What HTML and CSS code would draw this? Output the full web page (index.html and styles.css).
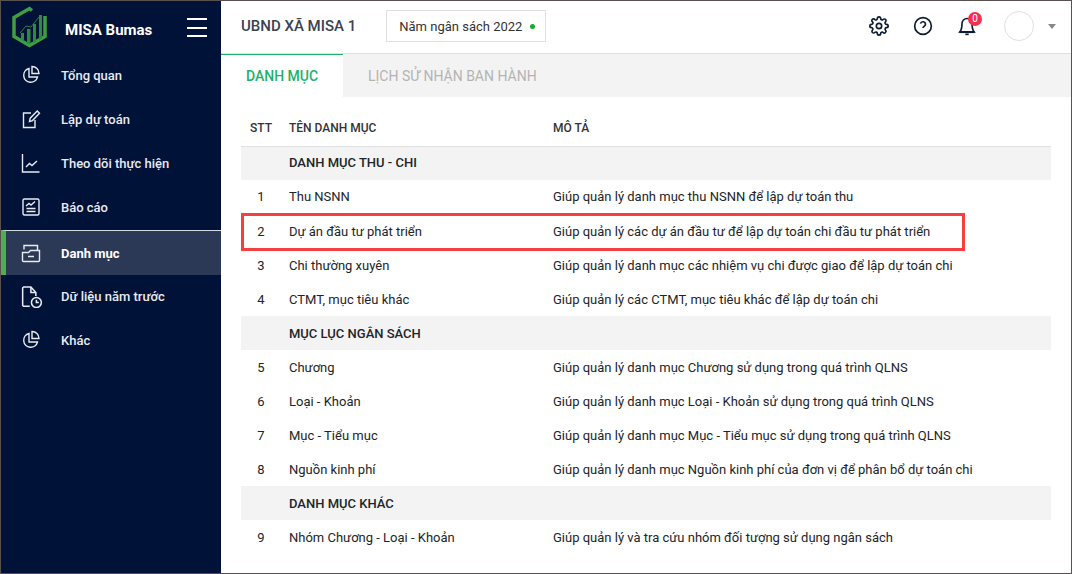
FILE: index.html
```html
<!DOCTYPE html>
<html>

<head>
  <meta charset="utf-8">
  <link rel="stylesheet" href="styles.css">
</head>

<body>
  <div class="app">
    <div class="sidebar">
      <div class="brand">
        <svg class="logo" viewBox="0 0 36 42" width="36" height="42">
          <path d="M20 4.500 17.500 2.500 2 11.500V30.500L17.500 39.500 33 30.500V10" fill="none" stroke="#3f9e42" stroke-width="3.500"/>
          <path d="M8 27 14 20 19 21 27 11" fill="none" stroke="#2f7d3a" stroke-width="1"/>
          <path d="M9 27h3v8.500l-3-1.700zM15 23h3.500v14.500h-3.500zM21 18h3v17.800l-3 1.500zM27 9h3v23l-3 2z" fill="#2f8a3c"/>
        </svg>
        <span class="brand-name">MISA Bumas</span>
        <div class="burger"><span></span><span></span><span></span></div>
      </div>

      <div class="menu">
        <div class="menu-item">
          <svg class="menu-icon" viewBox="0 0 20 20"><path d="M8 3.500a7 7 0 1 0 8.500 8.500H8z"/><path d="M11 1.500a7 7 0 0 1 7 7h-7z"/></svg>
          <span>Tổng quan</span>
        </div>
        <div class="menu-item">
          <svg class="menu-icon" viewBox="0 0 20 20"><path d="M10 4H2.500v14.500H14V11"/><path d="M8.500 12.500l.7-3.300 7-7.200 2.300 2.300-7 7.300z"/></svg>
          <span>Lập dự toán</span>
        </div>
        <div class="menu-item">
          <svg class="menu-icon" viewBox="0 0 20 20"><path d="M1.500 1v18h17"/><path d="M5 14l3.500-3.500 2.500 2 5-4.500"/></svg>
          <span>Theo dõi thực hiện</span>
        </div>
        <div class="menu-item">
          <svg class="menu-icon" viewBox="0 0 20 20"><rect x="2" y="2" width="16" height="16" rx="1.500"/><path d="M5 9l3-2.500 2 1.500 4-3.500M5.500 11.500h9M5.500 14.500h9"/></svg>
          <span>Báo cáo</span>
        </div>
        <div class="menu-item active">
          <svg class="menu-icon" viewBox="0 0 20 20"><path d="M1.500 9.500v8a1 1 0 0 0 1 1h15a1 1 0 0 0 1-1v-10h-9l-2 2z"/><path d="M3 6.500V2.500h13.500v5M7 13.500h6"/></svg>
          <span>Danh mục</span>
        </div>
        <div class="menu-item">
          <svg class="menu-icon history" viewBox="0 0 20 20"><path d="M8 18.500H3a1.500 1.500 0 0 1-1.500-1.500V2a1 1 0 0 1 1-1h6.500l4.500 5v3"/><path d="M9 1v5h4.500"/><circle cx="14" cy="15" r="4.500"/><path d="M14 12.500V15h2.200"/></svg>
          <span>Dữ liệu năm trước</span>
        </div>
        <div class="menu-item">
          <svg class="menu-icon" viewBox="0 0 20 20"><path d="M8 3.500a7 7 0 1 0 8.500 8.500H8z"/><path d="M11 1.500a7 7 0 0 1 7 7h-7z"/></svg>
          <span>Khác</span>
        </div>
      </div>
    </div>

    <div class="main">
      <div class="topbar">
        <div class="org-name">UBND XÃ MISA 1</div>
        <div class="year-box">Năm ngân sách 2022 <span class="dot"></span></div>
        <div class="top-actions">
          <svg class="top-icon" viewBox="0 0 24 24"><path d="M12 15.200a3.200 3.200 0 1 0 0-6.400 3.200 3.200 0 0 0 0 6.400z"/><path d="M19.400 15a1.700 1.700 0 0 0 .3 1.800l.1.100a2 2 0 1 1-2.900 2.900l-.1-.1a1.700 1.700 0 0 0-2.800 1.200v.1a2 2 0 1 1-4 0v-.1a1.700 1.700 0 0 0-2.900-1.200l-.1.100a2 2 0 1 1-2.800-2.900l.1-.1a1.700 1.700 0 0 0-1.200-2.800H3a2 2 0 1 1 0-4h.1a1.700 1.700 0 0 0 1.200-2.900l-.1-.1a2 2 0 1 1 2.800-2.800l.1.100a1.700 1.700 0 0 0 1.900.3 1.700 1.700 0 0 0 1-1.500V3a2 2 0 1 1 4 0v.1a1.700 1.700 0 0 0 2.800 1.200l.1-.1a2 2 0 1 1 2.900 2.800l-.1.100a1.700 1.700 0 0 0 1.200 2.900h.1a2 2 0 1 1 0 4h-.1a1.700 1.700 0 0 0-1.500 1z"/></svg>
          <svg class="top-icon" viewBox="0 0 24 24"><circle cx="12" cy="12" r="10"/><path d="M9 9.200a3 3 0 0 1 5.900 1c0 2-3 2.600-3 4.300"/><path d="M11.900 17.500h.1"/></svg>
          <div class="bell">
            <svg class="top-icon" viewBox="0 0 24 24"><path d="M18 9a6 6 0 0 0-12 0c0 7-2.500 10-2.500 10h17S18 16 18 9"/><path d="M3 19.500h18"/><path d="M10 22h4"/></svg>
            <span class="badge">0</span>
          </div>
          <div class="avatar"></div>
          <div class="caret"></div>
        </div>
      </div>

      <div class="tabs">
        <div class="tab active">DANH MỤC</div>
        <div class="tab">LỊCH SỬ NHẬN BAN HÀNH</div>
      </div>

      <div class="content">
        <table class="list">
          <colgroup>
            <col class="col-stt">
            <col class="col-name">
            <col>
          </colgroup>
          <thead>
            <tr>
              <th class="stt">STT</th>
              <th>TÊN DANH MỤC</th>
              <th>MÔ TẢ</th>
            </tr>
          </thead>
          <tbody>
            <tr class="group"><td></td><td colspan="2">DANH MỤC THU - CHI</td></tr>
            <tr><td class="stt">1</td><td>Thu NSNN</td><td>Giúp quản lý danh mục thu NSNN để lập dự toán thu</td></tr>
            <tr><td class="stt">2</td><td>Dự án đầu tư phát triển</td><td>Giúp quản lý các dự án đầu tư để lập dự toán chi đầu tư phát triển</td></tr>
            <tr><td class="stt">3</td><td>Chi thường xuyên</td><td>Giúp quản lý danh mục các nhiệm vụ chi được giao để lập dự toán chi</td></tr>
            <tr><td class="stt">4</td><td>CTMT, mục tiêu khác</td><td>Giúp quản lý các CTMT, mục tiêu khác để lập dự toán chi</td></tr>
            <tr class="group"><td></td><td colspan="2">MỤC LỤC NGÂN SÁCH</td></tr>
            <tr><td class="stt">5</td><td>Chương</td><td>Giúp quản lý danh mục Chương sử dụng trong quá trình QLNS</td></tr>
            <tr><td class="stt">6</td><td>Loại - Khoản</td><td>Giúp quản lý danh mục Loại - Khoản sử dụng trong quá trình QLNS</td></tr>
            <tr><td class="stt">7</td><td>Mục - Tiểu mục</td><td>Giúp quản lý danh mục Mục - Tiểu mục sử dụng trong quá trình QLNS</td></tr>
            <tr><td class="stt">8</td><td>Nguồn kinh phí</td><td>Giúp quản lý danh mục Nguồn kinh phí của đơn vị để phân bổ dự toán chi</td></tr>
            <tr class="group"><td></td><td colspan="2">DANH MỤC KHÁC</td></tr>
            <tr><td class="stt">9</td><td>Nhóm Chương - Loại - Khoản</td><td>Giúp quản lý và tra cứu nhóm đối tượng sử dụng ngân sách</td></tr>
          </tbody>
        </table>
        <div class="highlight"></div>
      </div>
    </div>
  </div>
</body>

</html>
```

FILE: styles.css
```css
:root {
  --navy: #001237;
  --navy-active: #2b3856;
  --green: #4caf50;
  --tab-green: #1fb26b;
  --text: #212529;
  --line: #e0e0e0;
  --gray-light: #f3f3f3;
}

* {
  margin: 0;
  padding: 0;
  box-sizing: border-box;
  font-family: Roboto, 'Liberation Sans', sans-serif;
}

body {
  width: 1072px;
  height: 574px;
  overflow: hidden;
  background-color: #fff;
}

.app {
  display: flex;
  width: 1072px;
  height: 574px;
  border: 1px solid #5a5050;
}

/* sidebar */
.sidebar {
  width: 220px;
  flex-shrink: 0;
  background-color: var(--navy);
  color: #fff;
}

.brand {
  display: flex;
  align-items: center;
  height: 52px;
  padding-left: 11px;
}

.logo {
  flex-shrink: 0;
}

.brand-name {
  margin-left: 17px;
  margin-top: 5px;
  font-size: 15px;
  font-weight: 700;
  white-space: nowrap;
}

.burger {
  display: flex;
  flex-direction: column;
  gap: 6.500px;
  margin-left: auto;
  margin-right: 14px;
  margin-top: 1px;
}

.burger span {
  display: block;
  width: 20px;
  height: 2px;
  background-color: #fff;
}

.menu-item {
  display: flex;
  align-items: center;
  height: 44px;
  padding-left: 20px;
  font-size: 13px;
  font-weight: 500;
  color: #e8ebf2;
}

.menu-item.active {
  height: 45px;
  margin-top: 1px;
  padding-left: 15px;
  border-top: 1px solid #d5d9e2;
  border-left: 5px solid var(--green);
  background-color: var(--navy-active);
  color: #fff;
  font-weight: 700;
}

.menu-item.active + .menu-item {
  height: 43px;
}

.menu-icon {
  width: 20px;
  height: 20px;
  margin-right: 20px;
  fill: none;
  stroke: #e8ebf2;
  stroke-width: 1.400;
  flex-shrink: 0;
}

.menu-icon.history {
  width: 22px;
  height: 22px;
  margin-right: 18px;
}

/* main */
.main {
  flex: 1;
  display: flex;
  flex-direction: column;
  min-width: 0;
}

.topbar {
  display: flex;
  align-items: center;
  height: 53px;
  padding-left: 20px;
  padding-bottom: 2px;
  border-bottom: 1px solid var(--line);
}

.org-name {
  font-size: 15px;
  font-weight: 500;
  color: #3b4252;
}

.year-box {
  display: flex;
  align-items: center;
  height: 32px;
  margin-left: 30px;
  padding: 0 10px 0 12px;
  border: 1px solid var(--line);
  font-size: 13px;
  color: #333;
}

.dot {
  width: 5px;
  height: 5px;
  margin-left: 8px;
  border-radius: 50%;
  background-color: #1aaa2c;
}

.top-actions {
  display: flex;
  align-items: center;
  margin-left: auto;
  margin-right: 15px;
}

.top-icon {
  width: 20px;
  height: 20px;
  display: block;
  fill: none;
  stroke: #0d1b33;
  stroke-width: 2;
  margin-right: 24px;
}

.bell {
  position: relative;
}

.badge {
  position: absolute;
  top: -4px;
  left: 11px;
  width: 14px;
  height: 14px;
  border-radius: 50%;
  background-color: #f5304f;
  color: #fff;
  font-size: 10px;
  line-height: 14px;
  text-align: center;
}

.avatar {
  width: 30px;
  height: 30px;
  margin-left: 3px;
  border: 1px solid var(--line);
  border-radius: 50%;
}

.caret {
  width: 0;
  height: 0;
  margin-left: 14px;
  border-left: 4px solid transparent;
  border-right: 4px solid transparent;
  border-top: 5px solid #888;
}

.tabs {
  display: flex;
  height: 43px;
  background-color: var(--gray-light);
}

.tab {
  padding: 0 25px;
  font-size: 14px;
  line-height: 44px;
  white-space: nowrap;
  color: #b3b3b3;
}

.tab.active {
  width: 122px;
  background-color: #fff;
  border-top: 1px solid var(--tab-green);
  line-height: 42px;
  font-weight: 500;
  color: var(--tab-green);
}

/* table */
.content {
  position: relative;
  padding: 13px 20px 0;
}

.list {
  width: 810px;
  border-collapse: collapse;
  table-layout: fixed;
  font-size: 13px;
  color: var(--text);
}

.col-stt {
  width: 40px;
}

.col-name {
  width: 264px;
}

.list th {
  height: 36px;
  padding: 0 8px;
  text-align: left;
  font-size: 12px;
  font-weight: 500;
  color: #333;
  border-bottom: 1px solid var(--line);
}

.list td {
  height: 34px;
  padding: 0 8px;
}

.list tbody tr:nth-child(-n+2) td {
  padding-bottom: 2px;
}

.list .stt {
  text-align: center;
}

.list th.stt {
  padding: 0;
}

.group td {
  background-color: var(--gray-light);
  font-size: 13px;
  font-weight: 500;
}

.highlight {
  position: absolute;
  top: 116px;
  left: 20px;
  width: 724px;
  height: 38px;
  border: 3px solid #f44040;
}
```
